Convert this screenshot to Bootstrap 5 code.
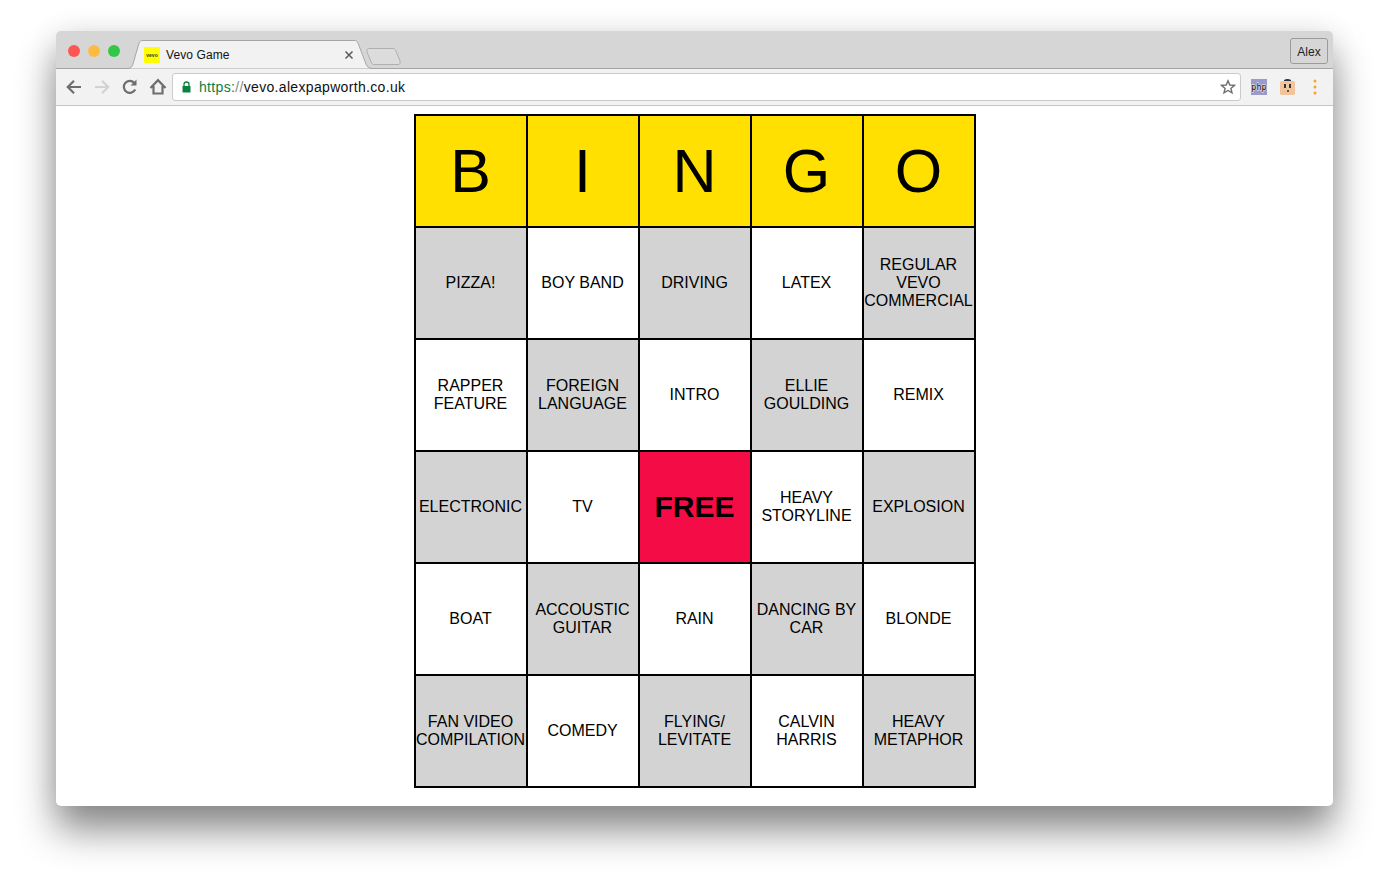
<!DOCTYPE html>
<html lang="en">

<head>
  <meta charset="UTF-8" />
  <meta name="viewport" content="width=device-width, initial-scale=1.0" />
  <title>Vevo Game</title>
  <link href="https://cdn.jsdelivr.net/npm/bootstrap@5.3.2/dist/css/bootstrap.min.css" rel="stylesheet" />
  <style>
    html, body { height: 886px; overflow: hidden; background: #fff; font-family: "Liberation Sans", Arial, sans-serif; }
    body { padding: 31px 56px 0 56px; }
    .browser-win { width: 1277px; height: 775px; background: #fff; border-radius: 5px; box-shadow: 0 24px 38px 0 rgba(0,0,0,.46), 0 0 30px rgba(0,0,0,.08); overflow: visible; }
    .tab-strip { height: 38px; background: #d6d6d6; border-bottom: 1px solid #a6a6a6; border-radius: 5px 5px 0 0; position: relative; }
    .win-dot { width: 12px; height: 12px; border-radius: 50%; }
    .dots-row { padding: 14px 0 0 12px; gap: 8px; }
    .dot-red { background: #fc5753; }
    .dot-amber { background: #fdbc40; }
    .dot-green { background: #33c748; }
    .tab-shape { position: absolute; left: 70px; top: 8px; }
    .tab-fav { position: absolute; left: 88px; top: 16px; width: 16px; height: 16px; background: #ffff00; color: #333; font-size: 5px; line-height: 16px; text-align: center; font-weight: 700; }
    .tab-title { position: absolute; left: 110px; top: 16px; font-size: 12px; line-height: 16px; color: #111; letter-spacing: .1px; }
    .tab-close { position: absolute; left: 288px; top: 19px; }
    .user-btn { position: absolute; right: 5px; top: 7px; width: 38px; height: 26px; border: 1px solid #9b9b9b; border-radius: 3px; font-size: 12px; line-height: 26px; text-align: center; color: #222; }
    .tool-bar { height: 37px; background: #f2f2f2; border-bottom: 1px solid #c4c4c4; padding-left: 8px; }
    .nav-ico { width: 20px; height: 20px; margin-right: 8px; flex: none; }
    .nav-last { margin-right: 4px; }
    .url-box { width: 1069px; height: 28px; background: #fff; border: 1px solid #cbcbcb; border-radius: 3px; font-size: 14px; letter-spacing: .33px; padding: 0 4px 0 9px; }
    .url-lock { margin-right: 8px; flex: none; }
    .url-scheme { color: #0b8043; }
    .url-sep { color: #888; }
    .url-host { color: #111; }
    .ext-ico { flex: none; }
    .ext-php { margin-left: 10px; }
    .ext-face { margin-left: 13px; }
    .ext-menu { margin-left: 18px; }
    .page-body { padding-top: 8px; }
    .bingo-grid { width: 562px; border: 2px solid #000; border-collapse: collapse; table-layout: fixed; margin: 0 auto; }
    .bingo-grid td, .bingo-grid th { width: 112px; height: 112px; border: 2px solid #000; text-align: center; vertical-align: middle; padding: 0; font-size: 16px; line-height: 18px; font-weight: 400; color: #000; }
    .bingo-grid th { background: #ffe000; font-size: 61px; line-height: 60px; }
    .bingo-grid td.cell-grey { background: #d3d3d3; }
    .bingo-grid td.cell-free { background: #f40c47; font-size: 30px; font-weight: 700; }
  </style>
</head>

<body>
  <div class="browser-win">
    <!-- tabs -->
    <div class="tab-strip">
      <div class="d-flex dots-row">
        <div class="win-dot dot-red"></div>
        <div class="win-dot dot-amber"></div>
        <div class="win-dot dot-green"></div>
      </div>
      <svg class="tab-shape" width="280" height="30" viewBox="0 0 280 30">
        <path d="M2 29.5 C5 29 6 28 7 25 L13 4 C14 2 15 1.500 17 1.500 H228 C230 1.500 231 2 232 4 L240 25 C241 28 243 29 246 29.500" fill="#f2f2f2" stroke="#a6a6a6" />
        <path d="M241 11 C241 10 242 9.500 243 9.500 H267 C268 9.500 269 10 269.500 11 L274 22 C274.500 24 274 25.500 272 25.500 H248 C247 25.500 246 25 245.500 24 L241 13 Z" fill="#dcdcdc" stroke="#b0b0b0" />
      </svg>
      <div class="tab-fav">vevo</div>
      <div class="tab-title">Vevo Game</div>
      <svg class="tab-close" width="10" height="10" viewBox="0 0 10 10">
        <path d="M1.500 1.500 L8.500 8.500 M8.500 1.500 L1.500 8.500" stroke="#5a5a5a" stroke-width="1.500" />
      </svg>
      <div class="user-btn">Alex</div>
    </div>

    <!-- toolbar -->
    <div class="tool-bar d-flex align-items-center">
      <svg class="nav-ico" viewBox="0 0 20 20"><path d="M17 10 H4.500 M10 3.800 L3.800 10 L10 16.200" fill="none" stroke="#6e6e6e" stroke-width="2.200" /></svg>
      <svg class="nav-ico" viewBox="0 0 20 20"><path d="M3 10 H15.500 M10 3.800 L16.200 10 L10 16.200" fill="none" stroke="#d2d2d2" stroke-width="2.200" /></svg>
      <svg class="nav-ico" viewBox="0 0 20 20"><path d="M15.200 12.500 A6 6 0 1 1 14.200 5.700" fill="none" stroke="#6e6e6e" stroke-width="2.200" /><path d="M16.500 2.500 V8.500 H10.500 Z" fill="#6e6e6e" /></svg>
      <svg class="nav-ico nav-last" viewBox="0 0 20 20"><path d="M2.500 11 L10 3.200 L17.500 11 M5.500 9 V16.500 H14.500 V9" fill="none" stroke="#6e6e6e" stroke-width="2.200" /></svg>
      <div class="url-box d-flex align-items-center">
        <svg class="url-lock" width="9" height="12" viewBox="0 0 9 12"><path d="M0.500 5 H8.500 V11.500 H0.500 Z" fill="#0b8043" /><path d="M2 5.500 V3.500 A2.500 2.500 0 0 1 7 3.500 V5.500" fill="none" stroke="#0b8043" stroke-width="1.300" /></svg>
        <span><span class="url-scheme">https:</span><span class="url-sep">//</span><span class="url-host">vevo.alexpapworth.co.uk</span></span>
        <svg class="ms-auto" width="16" height="16" viewBox="0 0 16 16"><path d="M8 1.800 L9.800 6 L14.400 6.400 L10.900 9.400 L12 13.900 L8 11.500 L4 13.900 L5.100 9.400 L1.600 6.400 L6.200 6 Z" fill="none" stroke="#6e6e6e" stroke-width="1.400" /></svg>
      </div>
      <svg class="ext-ico ext-php" width="16" height="16" viewBox="0 0 16 16"><rect width="16" height="16" fill="#9a9acb" /><text x="8" y="11" text-anchor="middle" font-family="DejaVu Sans Mono, monospace" font-size="8.500" fill="#000" stroke="#fff" stroke-width=".8" paint-order="stroke">php</text></svg>
      <svg class="ext-ico ext-face" width="15" height="18" viewBox="0 0 15 18"><path d="M4 2 Q7.500 0 11 2 V3 H4 Z" fill="#2c2c48" /><rect y="3" width="15" height="14" rx="1.500" fill="#f2c49b" /><rect x="4" y="6" width="2" height="4" fill="#333" /><rect x="9" y="6" width="2" height="4" fill="#333" /><rect x="7" y="12" width="2" height="2" fill="#555" /></svg>
      <svg class="ext-ico ext-menu" width="4" height="16" viewBox="0 0 4 16"><circle cx="2" cy="2" r="1.500" fill="#f5a623" /><circle cx="2" cy="8" r="1.500" fill="#f5a623" /><circle cx="2" cy="14" r="1.500" fill="#f5a623" /></svg>
    </div>

    <!-- page -->
    <div class="page-body" id="bingoPage"></div>
  </div>

  <script>
    const bingoHead = ['B', 'I', 'N', 'G', 'O'];
    const bingoRows = [
      ['PIZZA!', 'BOY BAND', 'DRIVING', 'LATEX', 'REGULAR VEVO COMMERCIAL'],
      ['RAPPER FEATURE', 'FOREIGN LANGUAGE', 'INTRO', 'ELLIE GOULDING', 'REMIX'],
      ['ELECTRONIC', 'TV', 'FREE', 'HEAVY STORYLINE', 'EXPLOSION'],
      ['BOAT', 'ACCOUSTIC GUITAR', 'RAIN', 'DANCING BY CAR', 'BLONDE'],
      ['FAN VIDEO COMPILATION', 'COMEDY', 'FLYING/ LEVITATE', 'CALVIN HARRIS', 'HEAVY METAPHOR']
    ];
    let html = '<table class="bingo-grid"><thead><tr>';
    bingoHead.forEach(h => { html += `<th>${h}</th>`; });
    html += '</tr></thead><tbody>';
    bingoRows.forEach((row, r) => {
      html += '<tr>';
      row.forEach((txt, c) => {
        let cls = (r + c) % 2 === 0 ? 'cell-grey' : '';
        if (txt === 'FREE') cls = 'cell-free';
        html += `<td class="${cls}">${txt}</td>`;
      });
      html += '</tr>';
    });
    html += '</tbody></table>';
    document.getElementById('bingoPage').innerHTML = html;
  </script>
  <script src="https://cdn.jsdelivr.net/npm/bootstrap@5.3.2/dist/js/bootstrap.bundle.min.js"></script>
</body>

</html>
